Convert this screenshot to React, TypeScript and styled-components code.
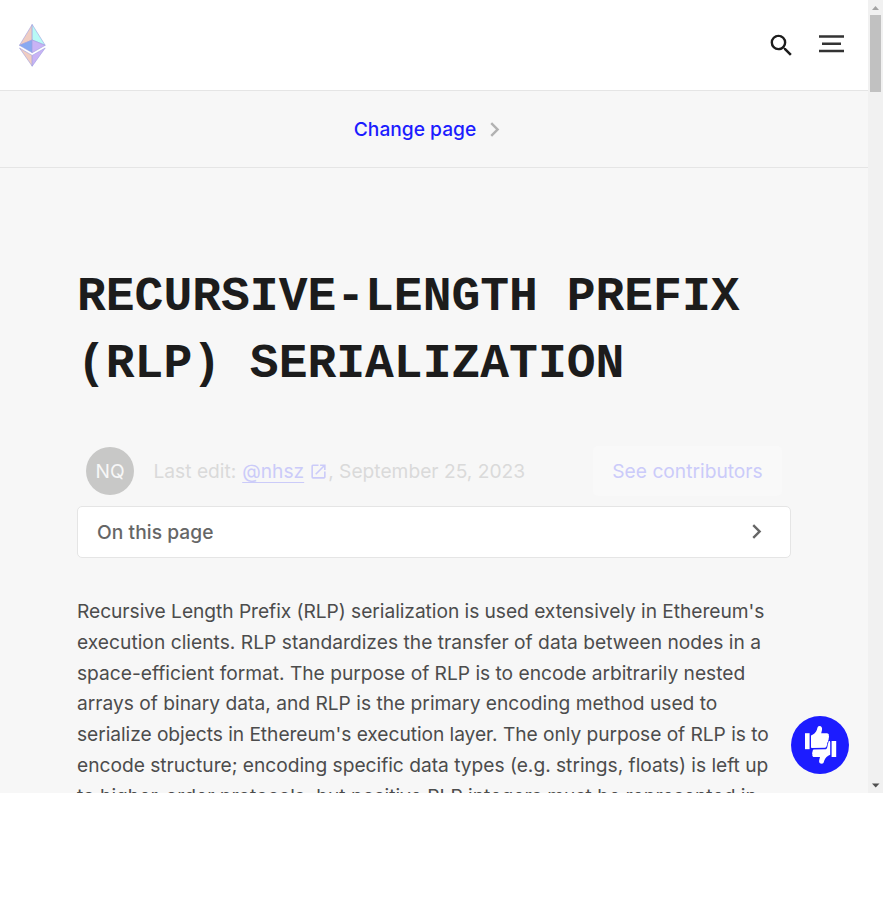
import React from "react";
import styled, { createGlobalStyle } from "styled-components";
import { MdSearch, MdOpenInNew, MdChevronRight } from "react-icons/md";

const GlobalStyle = createGlobalStyle`
  *, *::before, *::after { box-sizing: border-box; }
  html, body { margin: 0; background: #fff; }
  body { font-family: Inter, sans-serif; font-size: 19.2px; line-height: 30.72px; color: #4c4c4c; overflow: hidden; }
`;

const Viewport = styled.div`
  display: flex;
  width: 883px;
  height: 793px;
  overflow: hidden;
`;

const Page = styled.div`
  position: relative;
  width: 868px;
  height: 793px;
  overflow: hidden;
  background: #f7f7f7;
`;

const Header = styled.header`
  display: flex;
  align-items: center;
  height: 91px;
  padding: 0 24px 0 19px;
  background: #fff;
  border-bottom: 1px solid #e5e5e5;
`;

const HeaderActions = styled.div`
  display: flex;
  align-items: center;
  gap: 23px;
  margin-left: auto;
  color: #1c1c1c;
  svg { display: block; }
  svg:last-child { margin-bottom: 2px; }
`;

const ChangePage = styled.nav`
  display: flex;
  align-items: center;
  justify-content: center;
  height: 77px;
  padding-right: 5px;
  border-bottom: 1px solid #e5e5e5;
  color: #1c1cff;
  font-weight: 500;
  svg { color: #b2b2b2; margin: 0 0 0 4px; }
`;

const Main = styled.main`
  padding: 96px 77px 0;
`;

const Title = styled.h1`
  margin: 0;
  height: 134.4px;
  color: #1c1c1c;
  font: 700 48px/67.2px "Liberation Mono", monospace;
  text-transform: uppercase;
`;

const EditRow = styled.div`
  display: flex;
  align-items: center;
  height: 50px;
  margin-top: 48px;
  padding: 0 9px;
`;

const Avatar = styled.div`
  display: grid;
  place-items: center;
  width: 48px;
  height: 48px;
  margin-right: 19.5px;
  border-radius: 50%;
  background: #c8c8c7;
  color: #f7f7f7;
`;

const EditInfo = styled.div`
  display: flex;
  align-items: center;
  color: #dadada;
  white-space: pre;
`;

const EditLink = styled.a`
  display: inline-flex;
  align-items: center;
  margin-left: 0.5px;
  color: #cbcbf9;
  span { text-decoration: underline; text-underline-offset: 4px; }
  svg { margin-left: 5px; }
`;

const ContributorsButton = styled.button`
  width: 189px;
  height: 50px;
  margin-left: auto;
  padding: 0;
  border: 0;
  border-radius: 5px;
  background: #f9f9f9;
  color: #cbcbfa;
  font: inherit;
`;

const Contents = styled.div`
  display: flex;
  align-items: center;
  justify-content: space-between;
  height: 52px;
  margin-top: 10px;
  padding: 0 19px 0 19px;
  background: #fff;
  border: 1px solid #e5e5e5;
  border-radius: 5px;
  color: #666;
  font-weight: 500;
  letter-spacing: 0.06px;
  svg { margin-bottom: 1px; }
`;

const Paragraph = styled.p`
  margin: 37.8px 0 0;
  white-space: nowrap;
`;

const Line = styled.span<{ $tracking: number }>`
  display: block;
  letter-spacing: ${({ $tracking }) => $tracking}px;
`;

const Feedback = styled.button`
  position: absolute;
  right: 19px;
  bottom: 19px;
  display: grid;
  place-items: center;
  width: 58px;
  height: 58px;
  padding: 0 0 0 2px;
  border: 0;
  border-radius: 50%;
  background: #1c1cff;
`;

const Scrollbar = styled.div`
  display: flex;
  flex-direction: column;
  align-items: center;
  width: 15px;
  height: 793px;
  background: #f1f1f1;
`;

const ScrollArrow = styled.svg`
  display: block;
  flex: none;
  width: 15px;
  height: 15px;
`;

const ScrollThumb = styled.div`
  width: 11px;
  height: 77px;
  margin-bottom: auto;
  background: #c1c1c1;
`;

const lines = [
  { text: "Recursive Length Prefix (RLP) serialization is used extensively in Ethereum's", tracking: -0.047 },
  { text: "execution clients. RLP standardizes the transfer of data between nodes in a", tracking: 0.022 },
  { text: "space-efficient format. The purpose of RLP is to encode arbitrarily nested", tracking: -0.014 },
  { text: "arrays of binary data, and RLP is the primary encoding method used to", tracking: 0 },
  { text: "serialize objects in Ethereum's execution layer. The only purpose of RLP is to", tracking: -0.053 },
  { text: "encode structure; encoding specific data types (e.g. strings, floats) is left up", tracking: -0.018 },
  { text: "to higher-order protocols; but positive RLP integers must be represented in", tracking: 0.018 },
];

function EthLogo() {
  return (
    <svg width="27" height="43" viewBox="0 0 27 43" stroke="#a0a0e0" strokeWidth="0.6" strokeLinejoin="round">
      <path d="M13.2 .5 .5 21.3 13.2 16z" fill="#f0cdc2" />
      <path d="M13.2 .5 26.2 21.3 13.2 16z" fill="#b8faf6" />
      <path d="M13.2 16 .5 21.3 13.2 28.7z" fill="#88aaf1" />
      <path d="M13.2 16 26.2 21.3 13.2 28.7z" fill="#c9b3f5" />
      <path d="M.5 24 13.2 42.2V31.4z" fill="#f0cdc2" />
      <path d="M26.2 24 13.2 42.2V31.4z" fill="#c9b3f5" />
    </svg>
  );
}

function MenuIcon() {
  return (
    <svg width="25" height="18" viewBox="0 0 25 18" stroke="#333" strokeWidth="2.4">
      <path d="M0 1.5h25M3 8.7h19M0 16h25" />
    </svg>
  );
}

function ThumbsIcon() {
  return (
    <svg width="32" height="38" viewBox="0 0 32 38" fill="#fff">
      <path d="M0 7.2h4.6v16H0z" />
      <path d="M6 9.5c2.8-1.2 5-3 6-6 .5-2 .8-3.5 2.4-3.5 2.3 0 3 2 2.6 4l-.8 3.2h5.6c1.6 0 2.4 1.2 2 2.6.4.6.3 1.6-.1 2.3.2.9 0 1.7-.5 2.4 0 1-.3 1.8-.9 2.3-.3 2-.4 4.5-2.1 5L7 22c-.6 0-1-.5-1-1z" />
      <path d="M26.6 15h4.6v16h-4.6z" />
      <path d="M25.2 28.7c-2.8 1.2-5 3-6 6-.5 2-.8 3-2.4 3-2.3 0-3-1.5-2.6-3.5l.8-3.2H9.4c-1.6 0-2.4-1.2-2-2.6-.4-.6-.3-1.6.1-2.3 0-1 .3-2 1-2.5L21 23.2c1.2-.4 1.6-3 1.8-5.2.4-.7.9-2 .9-3h.5c.6 0 1 .5 1 1z" />
    </svg>
  );
}

export default function App() {
  return (
    <>
      <GlobalStyle />
      <Viewport>
        <Page>
          <Header>
            <EthLogo />
            <HeaderActions><MdSearch size={29} /><MenuIcon /></HeaderActions>
          </Header>
          <ChangePage>Change page<MdChevronRight size={29} /></ChangePage>
          <Main>
            <Title>Recursive-length prefix<br />(RLP) serialization</Title>
            <EditRow>
              <Avatar>NQ</Avatar>
              <EditInfo>
                Last edit: <EditLink><span>@nhsz</span><MdOpenInNew size={19} /></EditLink>, September 25, 2023
              </EditInfo>
              <ContributorsButton>See contributors</ContributorsButton>
            </EditRow>
            <Contents>On this page<MdChevronRight size={29} /></Contents>
            <Paragraph>
              {lines.map(({ text, tracking }) => <Line key={text} $tracking={tracking}>{text}</Line>)}
            </Paragraph>
          </Main>
          <Feedback aria-label="Feedback"><ThumbsIcon /></Feedback>
        </Page>
        <Scrollbar>
          <ScrollArrow viewBox="0 0 15 15"><path d="M4 10 7.5 6 11 10z" fill="#a3a3a3" /></ScrollArrow>
          <ScrollThumb />
          <ScrollArrow viewBox="0 0 15 15"><path d="M4 5.5h7.5L7.7 9.5z" fill="#505050" /></ScrollArrow>
        </Scrollbar>
      </Viewport>
    </>
  );
}
